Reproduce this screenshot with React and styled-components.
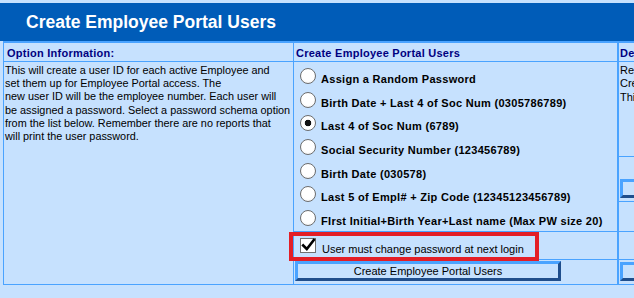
import React from "react";
import styled, { createGlobalStyle } from "styled-components";

const LINE = "#4aa3ff";
const NAVY = "#000080";
const DARK = "#1f4e8c";

const Global = createGlobalStyle`
  html, body { margin: 0; padding: 0; background: #c6e1fe; overflow: hidden; }
  body { font-family: "Liberation Sans", Arial, sans-serif; font-size: 11px; color: #000; }
`;

const Page = styled.div`
  width: 634px;
  height: 298px;
  overflow: hidden;
  padding-top: 3px;
  box-sizing: border-box;
`;

const TitleBar = styled.h1`
  margin: 0;
  height: 38px;
  background: #005cb8;
  color: #fff;
  font: bold 17.5px "Liberation Sans", Arial, sans-serif;
  display: flex;
  align-items: center;
  padding-left: 26px;
`;

const Grid = styled.div`
  display: grid;
  grid-template-columns: 290px 324px 260px;
  grid-template-rows: 19px 95px 45px 30px 28px 25px;
  width: max-content;
  margin-left: 3px;
  border-top: 2px solid ${LINE};
  border-left: 1px solid ${LINE};
`;

const Cell = styled.div`
  box-sizing: border-box;
  position: relative;
  grid-column: ${(p) => p.$col};
  grid-row: ${(p) => p.$row};
  border-right: 1px solid ${LINE};
  border-bottom: 1px solid ${LINE};
  border-left: ${(p) => (p.$edge ? `1px solid ${LINE}` : "none")};
  overflow: hidden;
`;

const HeadCell = styled(Cell)`
  color: ${NAVY};
  font-weight: bold;
  letter-spacing: 0.25px;
  line-height: 13px;
  padding: 4px 0 0 ${(p) => p.$pad ?? 2}px;
  white-space: nowrap;
`;

const InfoText = styled(Cell)`
  padding: 2px 0 0 1px;
  font-size: 10.85px;
  line-height: 13.2px;
  white-space: nowrap;
`;

const OptionList = styled(Cell)`
  display: grid;
  grid-auto-rows: 23.67px;
  align-content: start;
  padding: 6px 0 0 6px;
`;

const OptionRow = styled.label`
  display: flex;
  align-items: flex-start;
  gap: 5px;
  font-weight: bold;
  letter-spacing: 0.3px;
  white-space: nowrap;
`;

const Radio = styled.input.attrs({ type: "radio", name: "schema" })`
  appearance: none;
  margin: 0;
  flex: none;
  width: 16px;
  height: 16px;
  border-radius: 50%;
  border: 1px solid #6d6d6d;
  box-sizing: border-box;
  background: radial-gradient(circle at 50% 40%, #ffffff 0 55%, #ececec 100%);
  &:checked {
    background: radial-gradient(circle, #111 0 3px, #ffffff 3.6px);
  }
`;

const LabelText = styled.span`
  padding-top: 5px;
  line-height: 13px;
`;

const CheckCell = styled(Cell)`
  overflow: visible;
  padding: 6px 0 0 6px;
`;

const CheckRow = styled.label`
  display: flex;
  align-items: flex-start;
  gap: 6px;
  white-space: nowrap;
`;

const CheckBox = styled.span`
  flex: none;
  width: 16px;
  height: 15px;
  box-sizing: border-box;
  border: 1px solid #707070;
  background: #fff;
  display: flex;
  align-items: center;
  justify-content: center;
  overflow: visible;
`;

const Highlight = styled.span`
  position: absolute;
  left: -5px;
  top: 0;
  width: 250px;
  height: 29px;
  box-sizing: border-box;
  border: 4px solid #e31e26;
  pointer-events: none;
  z-index: 2;
`;

const ButtonCell = styled(Cell)`
  padding: ${(p) => p.$top ?? 1}px 0 0 ${(p) => p.$left ?? 1}px;
`;

const Button = styled.button`
  box-sizing: border-box;
  width: ${(p) => p.$w ?? 266}px;
  height: ${(p) => p.$h ?? 20}px;
  margin: 0;
  padding: 0;
  background: #c6e1fe;
  border-style: solid;
  border-width: 3px;
  border-color: ${LINE} ${DARK} ${DARK} ${LINE};
  font: 11px "Liberation Sans", Arial, sans-serif;
  color: #000;
  line-height: 12px;
  text-align: center;
  white-space: nowrap;
`;

const SideText = styled(Cell)`
  padding: 2px 0 0 1px;
  line-height: 13.3px;
  white-space: nowrap;
`;

const options = [
  "Assign a Random Password",
  "Birth Date + Last 4 of Soc Num (0305786789)",
  "Last 4 of Soc Num (6789)",
  "Social Security Number (123456789)",
  "Birth Date (030578)",
  "Last 5 of Empl# + Zip Code (12345123456789)",
  "FIrst Initial+Birth Year+Last name (Max PW size 20)",
];

function Check() {
  return (
    <svg width="15" height="15" viewBox="0 0 15 15" style={{ overflow: "visible" }}>
      <path d="M2.2 7.4 L5.8 11 L12.8 2" fill="none" stroke="#000" strokeWidth="2.6" strokeLinecap="square" strokeLinejoin="miter" />
    </svg>
  );
}

export default function App() {
  return (
    <>
      <Global />
      <Page>
        <TitleBar>Create Employee Portal Users</TitleBar>
        <Grid>
          <HeadCell $col={1} $row={1} $pad={3}>Option Information:</HeadCell>
          <HeadCell $col={2} $row={1}>Create Employee Portal Users</HeadCell>
          <HeadCell $col={3} $row={1} $edge $pad={1}>Delete Employee Portal Users</HeadCell>

          <InfoText $col={1} $row="2 / 7">
            This will create a user ID for each active Employee and
            <br />
            set them up for Employee Portal access. The
            <br />
            new user ID will be the employee number. Each user will
            <br />
            be assigned a password. Select a password schema option
            <br />
            from the list below. Remember there are no reports that
            <br />
            will print the user password.
          </InfoText>

          <OptionList $col={2} $row="2 / 5">
            {options.map((o, i) => (
              <OptionRow key={o}>
                <Radio defaultChecked={i === 2} />
                <LabelText>{o}</LabelText>
              </OptionRow>
            ))}
          </OptionList>

          <CheckCell $col={2} $row={5}>
            <CheckRow>
              <CheckBox>
                <Check />
              </CheckBox>
              <LabelText>User must change password at next login</LabelText>
            </CheckRow>
            <Highlight />
          </CheckCell>

          <ButtonCell $col={2} $row={6}>
            <Button>Create Employee Portal Users</Button>
          </ButtonCell>

          <SideText $col={3} $row={2} $edge>
            Removes the Employee Portal user for
            <br />
            Created users of terminated Employees.
            <br />
            This will not remove their history.
          </SideText>
          <ButtonCell $col={3} $row={3} $edge $top={22} $left={1}>
            <Button $w={240} $h={19}>Delete Employee Portal Users</Button>
          </ButtonCell>
          <Cell $col={3} $row={4} $edge />
          <Cell $col={3} $row={5} $edge />
          <ButtonCell $col={3} $row={6} $edge $top={2} $left={1}>
            <Button $w={240} $h={19}>Close</Button>
          </ButtonCell>
        </Grid>
      </Page>
    </>
  );
}
